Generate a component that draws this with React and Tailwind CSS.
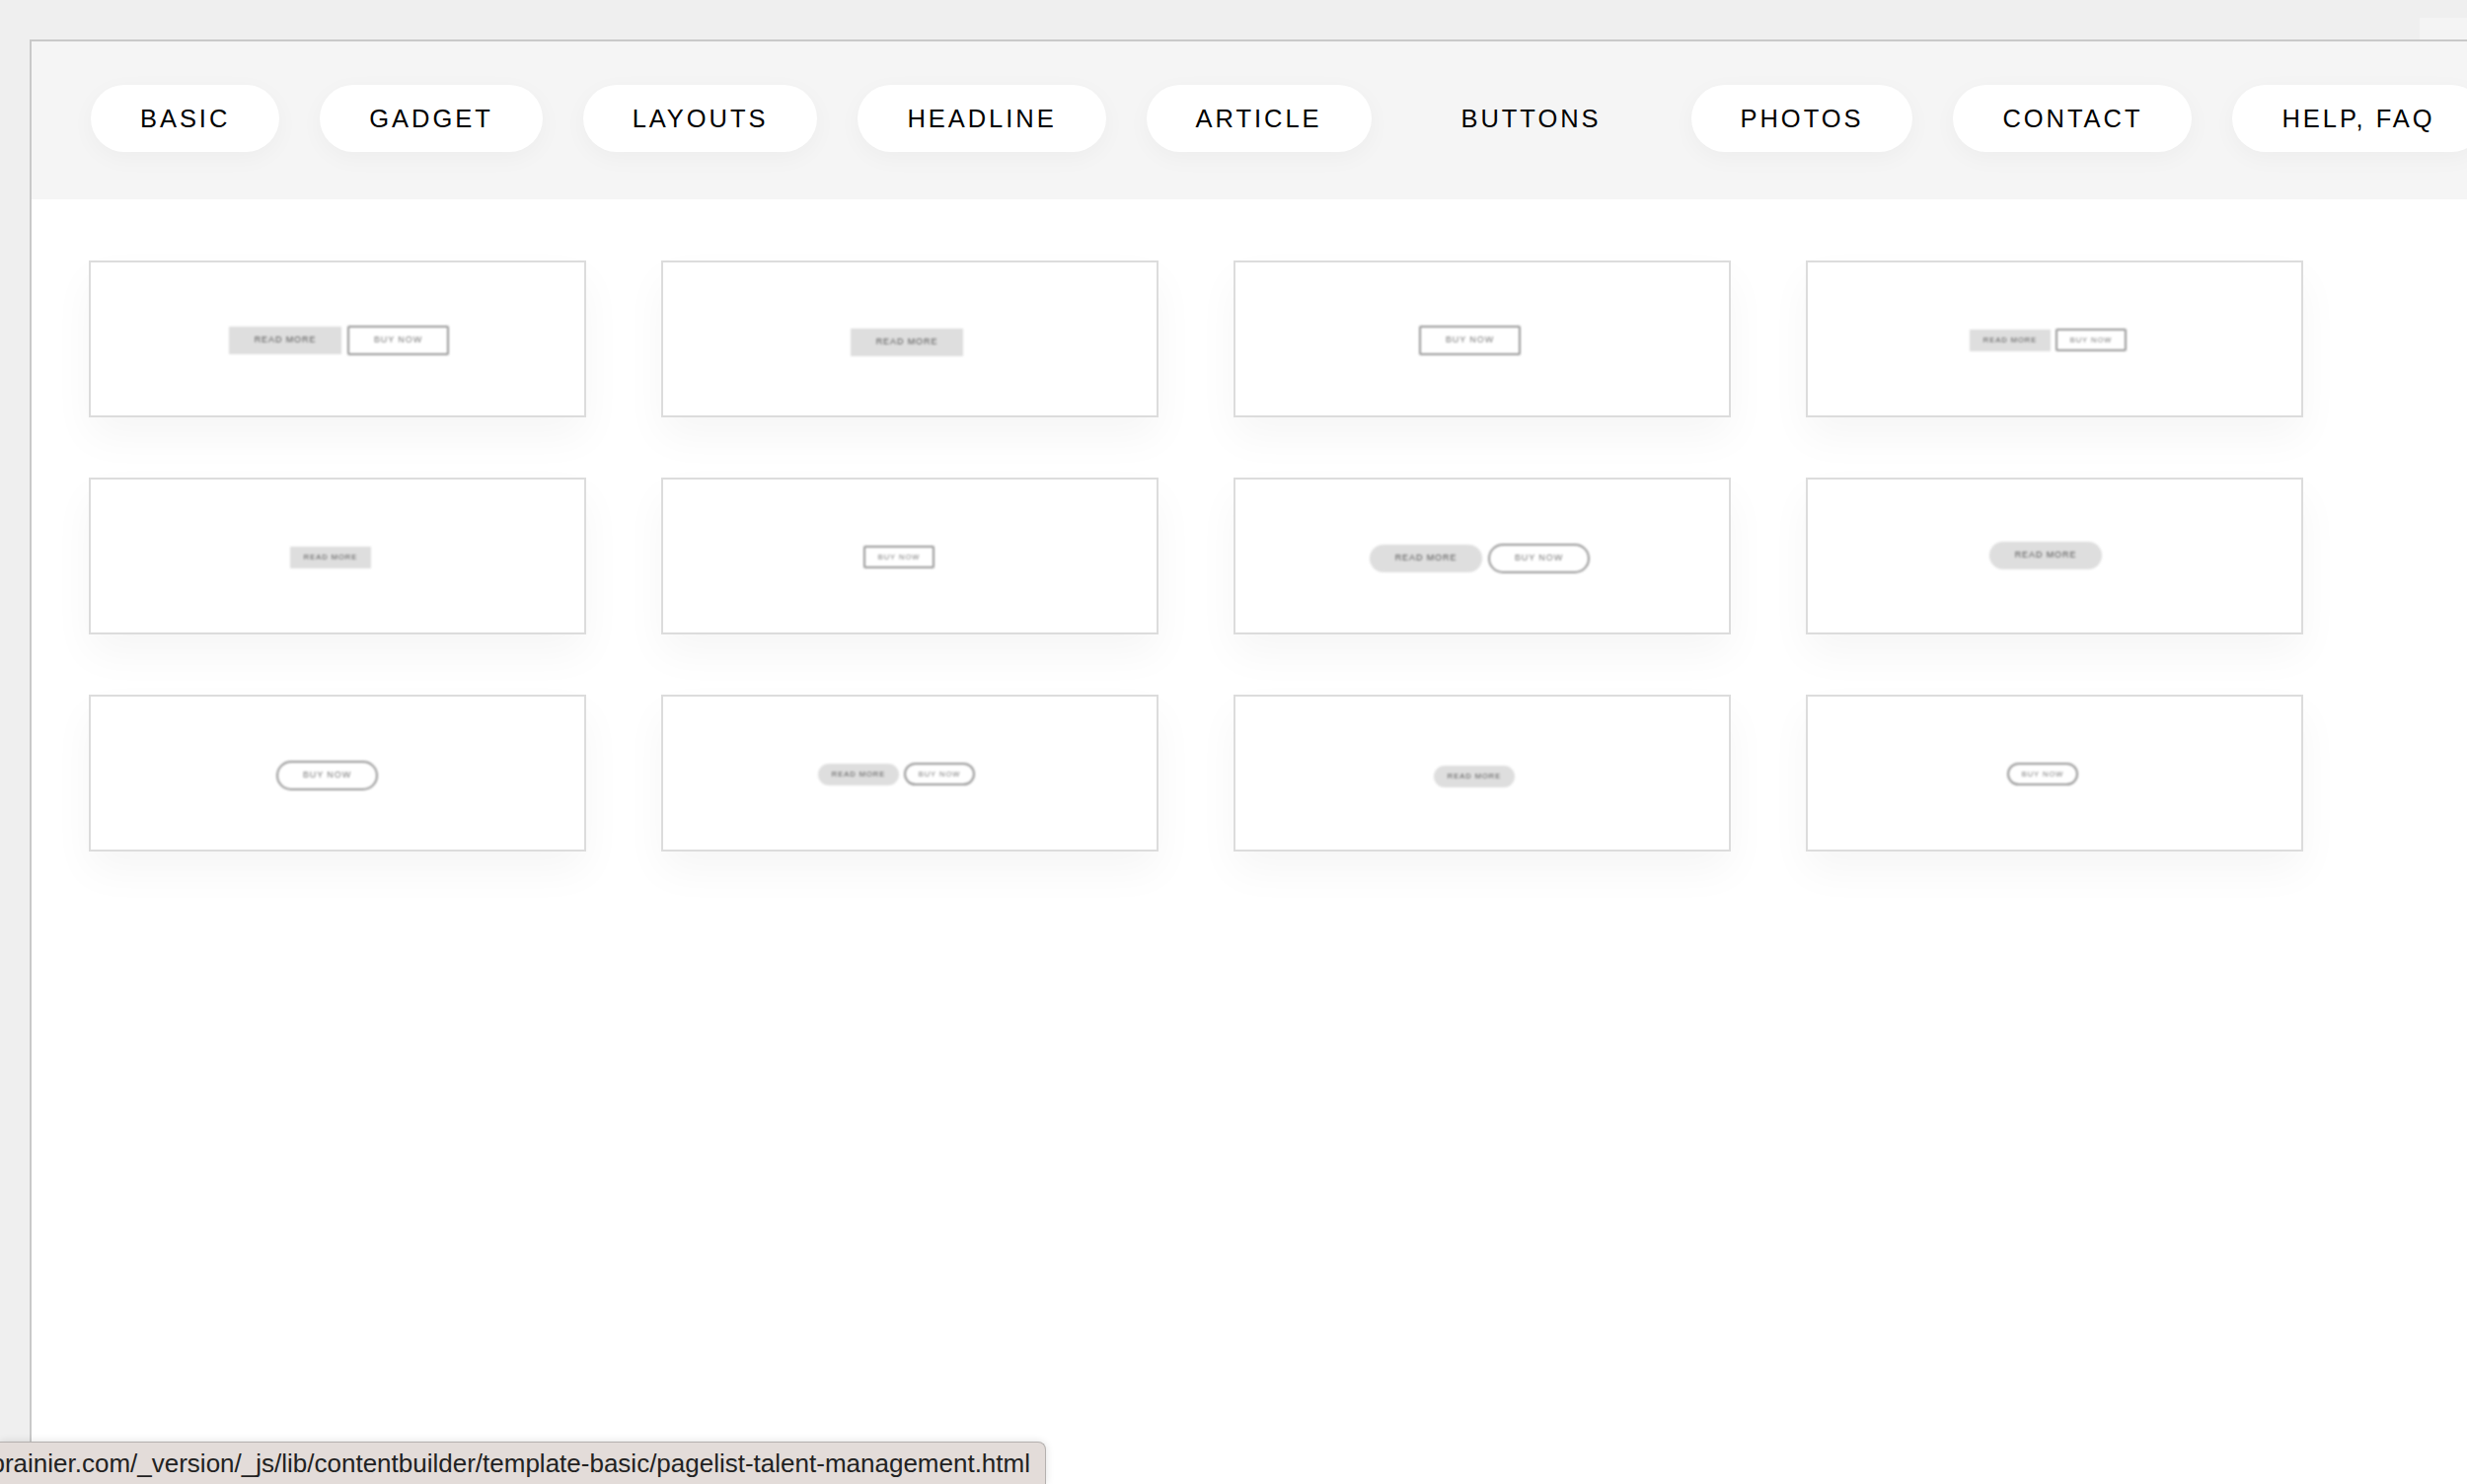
const navItems = ['BASIC', 'GADGET', 'LAYOUTS', 'HEADLINE', 'ARTICLE', 'BUTTONS', 'PHOTOS', 'CONTACT', 'HELP, FAQ'];

// each thumbnail: padding puts the buttons where they sit in the preview image
const rows = [
  [
    { pad: 'pl-[140px] pt-[64px]', lg: true, read: true, buy: true },
    { pad: 'pl-[190px] pt-[67px]', lg: true, read: true },
    { pad: 'pl-[186px] pt-[64px]', lg: true, buy: true },
    { pad: 'pl-[164px] pt-[67px]', read: true, buy: true },
  ],
  [
    { pad: 'pl-[202px] pt-[68px]', read: true },
    { pad: 'pl-[203px] pt-[67px]', buy: true },
    { pad: 'pl-[136px] pt-[65px]', lg: true, round: true, read: true, buy: true },
    { pad: 'pl-[184px] pt-[63px]', lg: true, round: true, read: true },
  ],
  [
    { pad: 'pl-[188px] pt-[65px]', lg: true, round: true, buy: true },
    { pad: 'pl-[157px] pt-[67px]', round: true, read: true, buy: true },
    { pad: 'pl-[201px] pt-[70px]', round: true, read: true },
    { pad: 'pl-[202px] pt-[67px]', round: true, buy: true },
  ],
];

function ReadMore({ lg, round }) {
  return (
    <span className={`flex items-center justify-center bg-[#dedede] text-[#555] whitespace-nowrap
      ${lg ? 'w-[114px] h-[28px] text-[9px] tracking-[0.9px]' : 'w-[82px] h-[22px] text-[7.5px] tracking-[1px]'}
      ${round ? 'rounded-full' : ''}`}>
      READ MORE
    </span>
  );
}

function BuyNow({ lg, round }) {
  return (
    <span className={`flex items-center justify-center border-2 border-[#989898] bg-white text-[#777] whitespace-nowrap
      ${lg ? 'w-[103px] h-[30px] text-[9px] tracking-[0.9px]' : 'w-[72px] h-[23px] text-[7.5px] tracking-[1px]'}
      ${round ? 'rounded-full' : 'rounded-[2px]'}`}>
      BUY NOW
    </span>
  );
}

function Thumb({ t }) {
  return (
    <div className={`w-[504px] h-[159px] bg-white border-2 border-[#dcdcdc] shadow-[0_20px_40px_rgba(0,0,0,0.04)] ${t.pad}`}>
      <div className={`flex items-center blur-[1px] ${t.lg ? 'gap-[6px]' : 'gap-[5px]'}`}>
        {t.read && <ReadMore lg={t.lg} round={t.round} />}
        {t.buy && <BuyNow lg={t.lg} round={t.round} />}
      </div>
    </div>
  );
}

export default function App() {
  return (
    <div className="relative w-[2500px] h-[1504px] overflow-hidden bg-[#efefef] pl-[30px] pt-[40px] font-['Liberation_Sans',Arial,sans-serif]">
      {/* scrollbar stub top right */}
      <div className="absolute top-[18px] right-0 w-[48px] h-[22px] bg-[#f4f4f4]" />

      <div className="h-[1464px] bg-white border-l-[2px] border-t-[2px] border-[#c9c9c9]">
        <nav className="flex items-start gap-[41px] h-[160px] pl-[60px] pt-[44px] bg-[#f5f5f5] overflow-hidden">
          {navItems.map((item) => (
            <span
              key={item}
              className={`shrink-0 flex items-center h-[68px] px-[50px] rounded-[34px] text-[25.5px] tracking-[2.95px] text-black whitespace-nowrap
                ${item === 'BUTTONS' ? '' : 'bg-white shadow-[0_6px_24px_rgba(0,0,0,0.035)]'}`}
            >
              {item}
            </span>
          ))}
        </nav>

        <div className="flex flex-col gap-[61px] pl-[58px] pt-[62px]">
          {rows.map((row, i) => (
            <div key={i} className="flex gap-[76px]">
              {row.map((t, j) => (
                <Thumb key={j} t={t} />
              ))}
            </div>
          ))}
        </div>
      </div>

      {/* browser link status bubble */}
      <div className="absolute left-0 bottom-0 w-[1060px] h-[43px] flex items-center justify-end pr-[15px] overflow-hidden bg-[#e3dcd9] border-t border-r border-[#b4b0ae] rounded-tr-[8px] shadow-[0_0_8px_rgba(0,0,0,0.12)]">
        <span className="shrink-0 whitespace-nowrap text-[26px] text-[#222]">
          brainier.com/_version/_js/lib/contentbuilder/template-basic/pagelist-talent-management.html
        </span>
      </div>
    </div>
  );
}
